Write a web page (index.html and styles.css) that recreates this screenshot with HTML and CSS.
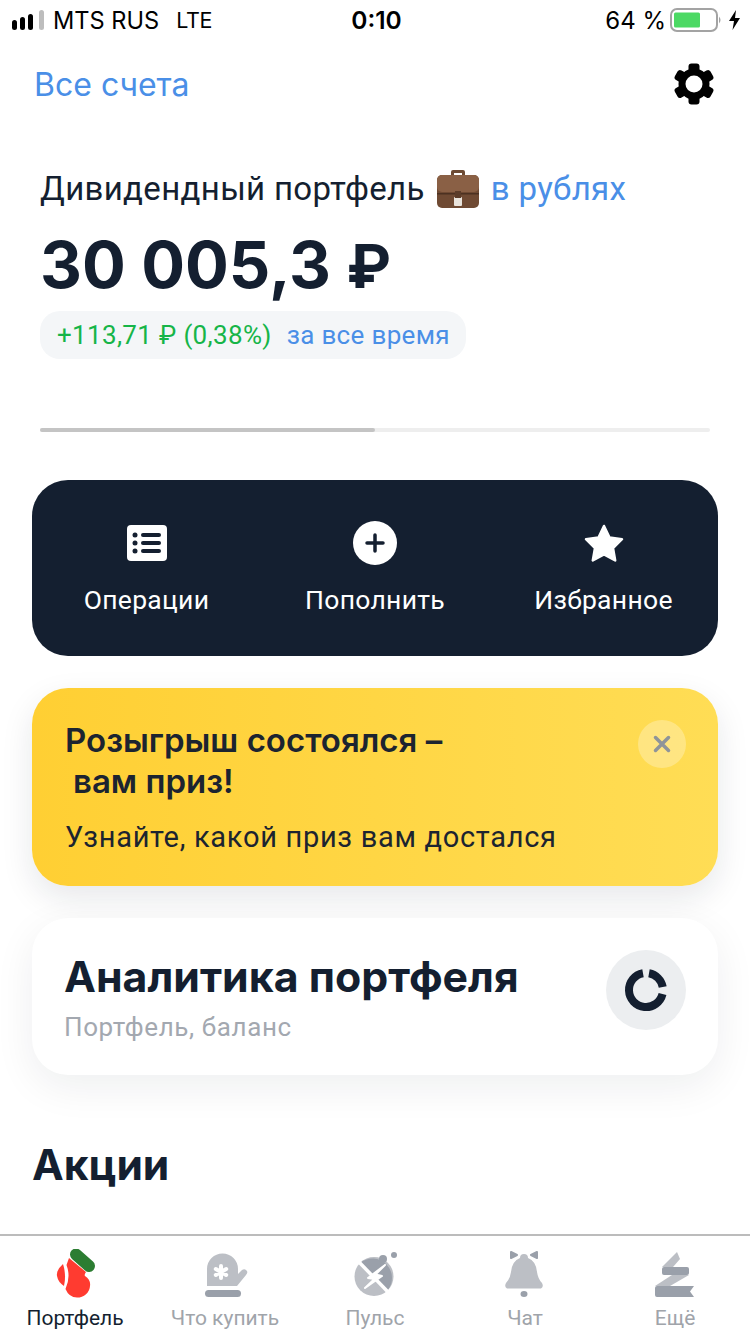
FILE: index.html
```html
<!DOCTYPE html>
<html lang="ru">
<head>
  <meta charset="UTF-8" />
  <meta name="viewport" content="width=device-width, initial-scale=1.0"/>
  <title>Портфель</title>
  <link rel="stylesheet" href="styles.css">
</head>
<body>
  <!-- Status bar -->
  <div class="status">
    <div class="status-left">
      <svg class="signal" width="33" height="20" viewBox="0 0 33 20">
        <rect x="0" y="10" width="5" height="10" rx="2.500" fill="#000"/>
        <rect x="8" y="7" width="5" height="13" rx="2.500" fill="#000"/>
        <rect x="16" y="4" width="5" height="16" rx="2.500" fill="#000"/>
        <rect x="27" y="0" width="5" height="20" rx="2.500" fill="#bdbdbd"/>
      </svg>
      <span>MTS RUS</span>
      <span class="lte">LTE</span>
    </div>
    <div class="status-time">0:10</div>
    <div class="status-right">
      <span>64 %</span>
      <svg width="54" height="24" viewBox="0 0 54 24">
        <rect x="1" y="1" width="46" height="22" rx="6" fill="none" stroke="#a3a3a3" stroke-width="2"/>
        <rect x="4" y="4.500" width="26" height="15" rx="1.500" fill="#4cd964"/>
        <path d="M49 8.500 Q52 12 49 15.500Z" fill="#a3a3a3"/>
      </svg>
      <svg class="bolt" width="13" height="20" viewBox="0 0 13 20">
        <path d="M8 0 L1 11 H6 L4.500 20 L12 8 H7 Z" fill="#000"/>
      </svg>
    </div>
  </div>

  <!-- Header -->
  <div class="topbar">
    <a class="accounts">Все счета</a>
    <svg width="42" height="42" viewBox="0 0 42 42">
      <g fill="#000">
        <rect x="15.500" y="0.500" width="11" height="41" rx="3"/>
        <rect x="15.500" y="0.500" width="11" height="41" rx="3" transform="rotate(60 21 21)"/>
        <rect x="15.500" y="0.500" width="11" height="41" rx="3" transform="rotate(120 21 21)"/>
        <circle cx="21" cy="21" r="15.500"/>
      </g>
      <circle cx="21" cy="21" r="8.500" fill="#fff"/>
    </svg>
  </div>

  <!-- Portfolio summary -->
  <div class="summary">
    <div class="summary-title">
      Дивидендный портфель
      <svg class="briefcase" width="44" height="40" viewBox="0 0 44 40">
        <path d="M15 7 V3 Q15 1 17 1 H27 Q29 1 29 3 V7 H26 V4 H18 V7Z" fill="#6d4a33"/>
        <rect x="1" y="6" width="42" height="33" rx="5" fill="#6f4a33"/>
        <rect x="1" y="6" width="42" height="17" rx="5" fill="#8a6045"/>
        <rect x="1" y="24" width="42" height="1.500" fill="#4c3121"/>
        <rect x="18" y="28" width="8" height="9" rx="1" fill="#e9e4dc"/>
        <rect x="19" y="22" width="6" height="7" fill="#5b3c29"/>
      </svg>
      <a class="link">в рублях</a>
    </div>
    <div class="amount">30 005,3 <span class="amount-cur">₽</span></div>
    <div class="pill">
      <span class="gain">+113,71 ₽ (0,38%)</span>
      <a class="link">за все время</a>
    </div>
    <div class="progress"><div class="progress-fill"></div></div>
  </div>

  <!-- Quick actions -->
  <div class="actions">
    <div class="action">
      <svg width="40" height="36" viewBox="0 0 40 36">
        <rect width="40" height="36" rx="4" fill="#fff"/>
        <g fill="#141f30">
          <circle cx="8" cy="10" r="2.500"/><rect x="14" y="8" width="20" height="4" rx="2"/>
          <circle cx="8" cy="18" r="2.500"/><rect x="14" y="16" width="20" height="4" rx="2"/>
          <circle cx="8" cy="26" r="2.500"/><rect x="14" y="24" width="20" height="4" rx="2"/>
        </g>
      </svg>
      <span>Операции</span>
    </div>
    <div class="action">
      <svg width="44" height="44" viewBox="0 0 44 44">
        <circle cx="22" cy="22" r="22" fill="#fff"/>
        <path d="M22 14 V30 M14 22 H30" stroke="#141f30" stroke-width="3.500" stroke-linecap="round"/>
      </svg>
      <span>Пополнить</span>
    </div>
    <div class="action">
      <svg width="40" height="38" viewBox="0 0 40 38">
        <path d="M20 2 L25.500 13.500 L38 15.200 L29 24 L31.200 36.500 L20 30.500 L8.800 36.500 L11 24 L2 15.200 L14.500 13.500 Z" fill="#fff" stroke="#fff" stroke-width="2.500" stroke-linejoin="round"/>
      </svg>
      <span>Избранное</span>
    </div>
  </div>

  <!-- Promo banner -->
  <div class="promo">
    <div class="promo-text">
      <h3>Розыгрыш состоялся –<br><span class="promo-indent">вам приз!</span></h3>
      <p>Узнайте, какой приз вам достался</p>
    </div>
    <div class="promo-close">
      <svg width="18" height="18" viewBox="0 0 18 18">
        <path d="M2.500 2.500 L15.500 15.500 M15.500 2.500 L2.500 15.500" stroke="#8f9499" stroke-width="3.500" stroke-linecap="round"/>
      </svg>
    </div>
  </div>

  <!-- Analytics card -->
  <div class="analytics">
    <div>
      <h2>Аналитика портфеля</h2>
      <p>Портфель, баланс</p>
    </div>
    <div class="analytics-icon">
      <svg width="44" height="44" viewBox="0 0 44 44">
        <g fill="none" stroke="#141f30" stroke-width="8">
          <path d="M19 5.270 A17 17 0 1 0 38.520 26"/>
          <path d="M25 5.270 A17 17 0 0 1 38.730 19"/>
        </g>
      </svg>
    </div>
  </div>

  <h1 class="section-title">Акции</h1>

  <!-- Tab bar -->
  <div class="tabbar">
    <div class="tab tab-active">
      <svg width="50" height="50" viewBox="0 0 50 50">
        <path d="M19 9 L36 23 Q34 26 35 27 Q41 31 40 37 A13 12 0 0 1 27 48.500 Q19 48.500 15.500 40 Q21 28 16.500 16 Z" fill="#ff3b30"/>
        <path d="M13 15 Q6 21 7 27 Q8 33 14 37 Q16.500 26 13 15Z" fill="#ff3b30"/>
        <path d="M26 5.500 L39 17" stroke="#2c7d32" stroke-width="12" stroke-linecap="round"/>
      </svg>
      <span>Портфель</span>
    </div>
    <div class="tab">
      <svg width="50" height="50" viewBox="0 0 50 50">
        <path d="M7 37 V20 A15.500 15.500 0 0 1 38 20 V25 L42 21 Q45 19 47 22 Q48 24 46 26 L37 37Z" fill="#bcbfc5"/>
        <rect x="5" y="41" width="36" height="7" rx="3.500" fill="#9aa0aa"/>
        <path d="M21 17 V29 M15.800 20 L26.200 26 M26.200 20 L15.800 26" stroke="#fff" stroke-width="4" stroke-linecap="round"/>
      </svg>
      <span>Что купить</span>
    </div>
    <div class="tab">
      <svg width="50" height="50" viewBox="0 0 50 50">
        <circle cx="24" cy="27.500" r="19.500" fill="#bcbfc5"/>
        <path d="M10 14 A19.500 19.500 0 0 1 37 42 Z" fill="#9aa0aa"/>
        <circle cx="33" cy="10" r="4" fill="#9aa0aa"/>
        <circle cx="44" cy="6" r="3" fill="#9aa0aa"/>
        <path d="M8 12 L39 44" stroke="#fff" stroke-width="3.500"/>
        <path d="M35 16 L18 29 L24.500 30 L15 39 L32 27 L25.500 25.500Z" fill="#fff" stroke="#fff" stroke-width="2" stroke-linejoin="round"/>
      </svg>
      <span>Пульс</span>
    </div>
    <div class="tab">
      <svg width="50" height="50" viewBox="0 0 50 50">
        <g transform="translate(-1 0)">
          <path d="M25 5 Q29 5 29 9 Q37 12 38 23 Q39 30 43 34 Q45 38 42 39.500 H8 Q5 38 7 34 Q11 30 12 23 Q13 12 21 9 Q21 5 25 5Z" fill="#bcbfc5"/>
          <ellipse cx="25" cy="45" rx="3.500" ry="3" fill="#9aa0aa"/>
          <path d="M12 3 L18 6 L12 9 Z M38 3 L32 6 L38 9 Z" fill="#9aa0aa" stroke="#9aa0aa" stroke-width="2" stroke-linejoin="round"/>
        </g>
      </svg>
      <span>Чат</span>
    </div>
    <div class="tab">
      <svg width="50" height="50" viewBox="0 0 50 50">
        <path d="M12 18 L27 3 L30 10 L23 18Z" fill="#bcbfc5"/>
        <rect x="12" y="18" width="27" height="8" rx="2" fill="#9aa0aa"/>
        <path d="M5 37 L22 26 H39 L20 37Z" fill="#bcbfc5"/>
        <path d="M5 39 Q5 37 7 37 H44 L40 42.500 L44 48 H7 Q5 48 5 46Z" fill="#9aa0aa"/>
      </svg>
      <span>Ещё</span>
    </div>
  </div>
</body>
</html>
```

FILE: styles.css
```css
/* RESET & BASE */
* {
  margin: 0; padding: 0;
  box-sizing: border-box;
}
body {
  width: 750px; height: 1334px;
  background: #fff;
  color: #141f30;
  font-family: 'Roboto', 'Liberation Sans', sans-serif;
  overflow: hidden;
  display: flex; flex-direction: column;
}
.link { color: #4a8fe7; }

/* STATUS BAR */
.status {
  height: 40px;
  padding: 0 9px 0 12px;
  display: flex; align-items: center;
  justify-content: space-between;
  color: #000;
  font-family: 'Inter', sans-serif;
  font-size: 24px;
}
.status-left, .status-right {
  width: 310px;
  display: flex; align-items: center;
}
.status-left { gap: 8px; font-size: 23.600px; }
.status-left .lte { margin-left: 9px; font-size: 21.500px; letter-spacing: -0.300px; }
.status-right { justify-content: flex-end; gap: 4px; }
.bolt { margin-left: 0; }
.status-time { font-weight: 600; font-size: 24.500px; }

/* HEADER */
.topbar {
  height: 90px;
  padding: 0 35px 2px 34px;
  display: flex; align-items: center;
  justify-content: space-between;
}
.accounts {
  font-family: 'Inter', sans-serif;
  font-size: 32px;
  color: #4a8fe7;
}

/* SUMMARY */
.summary { padding: 35px 40px 0; }
.summary-title {
  height: 46px;
  display: flex; align-items: center; gap: 11px;
  font-size: 33px;
  letter-spacing: 0.330px;
}
.briefcase { margin-top: 2px; }
.amount {
  margin-top: 20px;
  font-family: 'Inter', sans-serif;
  font-size: 65px; line-height: 68px;
  font-weight: 700;
}
.amount-cur { font-size: 60px; }
.pill {
  margin-top: 11px;
  height: 48px; width: 426px;
  padding: 0 17px;
  display: flex; align-items: center; gap: 15px;
  background: #f4f6f8;
  border-radius: 20px;
  font-size: 26px;
  letter-spacing: 0.330px;
  white-space: nowrap;
}
.gain { color: #16b548; }
.progress {
  margin-top: 69px;
  height: 4px;
  background: #eeeeee;
  border-radius: 2px;
}
.progress-fill {
  width: 50%; height: 100%;
  background: #c4c4c4;
  border-radius: 2px;
}

/* QUICK ACTIONS */
.actions {
  margin: 48px 32px 0;
  height: 176px;
  background: #141f30;
  border-radius: 36px;
  display: grid; grid-template-columns: 229px 228px 229px;
  color: #fff;
}
.action {
  display: flex; flex-direction: column;
  align-items: center;
  font-size: 26.500px;
  letter-spacing: 0.300px;
}
.action svg { margin-top: 41px; height: 44px; }
.action span { margin-top: 19px; }

/* PROMO */
.promo {
  margin: 32px 32px 0;
  height: 198px;
  padding: 32px 32px 0 33px;
  border-radius: 36px;
  background: linear-gradient(90deg, #ffcf33, #ffdd55);
  box-shadow: 0 12px 32px rgba(20,31,48,0.10);
  display: flex; justify-content: space-between;
}
.promo h3 {
  font-family: 'Inter', sans-serif;
  font-size: 33px; line-height: 41px;
  font-weight: 600;
  color: #1c2430;
}
.promo-indent { margin-left: 8px; }
.promo p {
  margin-top: 16px;
  font-size: 29px; line-height: 38px;
  letter-spacing: 0.700px;
  color: #1c2430;
}
.promo-close {
  width: 48px; height: 48px;
  border-radius: 50%;
  background: rgba(255,255,255,0.28);
  display: flex; align-items: center; justify-content: center;
}

/* ANALYTICS */
.analytics {
  margin: 32px 32px 0;
  height: 157px;
  padding: 0 32px;
  border-radius: 36px;
  background: #fff;
  box-shadow: 0 12px 40px rgba(20,31,48,0.07);
  display: flex; justify-content: space-between;
}
.analytics h2 {
  margin-top: 35px;
  font-family: 'Inter', sans-serif;
  font-size: 42.800px; line-height: 48px;
  font-weight: 700;
}
.analytics p {
  margin-top: 11px;
  font-size: 26px; line-height: 30px;
  letter-spacing: 0.600px;
  color: #a3a8b0;
}
.analytics-icon {
  margin-top: 32px;
  width: 80px; height: 80px;
  border-radius: 50%;
  background: #eceef0;
  display: flex; align-items: center; justify-content: center;
}

.section-title {
  margin: 66px 32px 0;
  font-family: 'Inter', sans-serif;
  font-size: 42.500px; line-height: 48px;
  font-weight: 700;
}

/* TAB BAR */
.tabbar {
  margin-top: auto;
  height: 100px;
  border-top: 2px solid #bcbcbc;
  display: grid; grid-template-columns: repeat(5, 150px);
  background: #fff;
}
.tab {
  display: flex; flex-direction: column;
  align-items: center;
  padding-top: 13px;
  font-size: 21px;
  color: #a0a4aa;
}
.tab span { margin-top: 6px; line-height: 26px; }
.tab-active { color: #141f30; }
```
